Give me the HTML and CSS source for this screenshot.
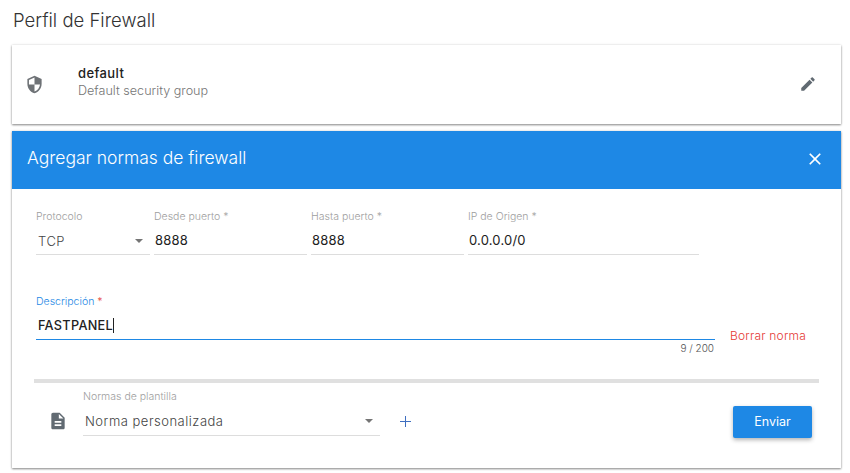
FILE: index.html
```html
<!DOCTYPE html>
<html lang="es">
<head>
    <meta charset="UTF-8">
    <title>Perfil de Firewall</title>
    <link rel="stylesheet" href="styles.css">
</head>
<body>
<div class="page">
    <h1 class="page-title">Perfil de Firewall</h1>

    <div class="card profile">
        <svg class="icon profile-shield" viewBox="0 0 24 24"><path d="M12 1L3 5v6c0 5.55 3.84 10.74 9 12 5.16-1.26 9-6.45 9-12V5l-9-4zm0 10.99h7c-.53 4.12-3.28 7.79-7 8.94V12H5V6.3l7-3.11v8.8z"/></svg>
        <div class="profile-text">
            <div class="profile-name">default</div>
            <div class="profile-desc">Default security group</div>
        </div>
        <svg class="icon profile-edit" viewBox="0 0 24 24"><path d="M3 17.25V21h3.75L17.81 9.94l-3.75-3.75L3 17.25zM20.71 7.04c.39-.39.39-1.02 0-1.41l-2.34-2.34c-.39-.39-1.02-.39-1.41 0l-1.83 1.83 3.75 3.75 1.83-1.83z"/></svg>
    </div>

    <div class="card rule">
        <div class="rule-header">
            <div class="rule-title">Agregar normas de firewall</div>
            <svg class="icon rule-close" viewBox="0 0 24 24"><path d="M19 6.41L17.59 5 12 10.59 6.41 5 5 6.41 10.59 12 5 17.59 6.41 19 12 13.41 17.59 19 19 17.59 13.41 12z"/></svg>
        </div>

        <div class="rule-body">
            <div class="row-ports">
                <div class="field field-proto">
                    <div class="field-label">Protocolo</div>
                    <div class="field-control control-select">
                        <span class="select-value">TCP</span>
                        <span class="caret"></span>
                    </div>
                </div>
                <div class="field field-port">
                    <div class="field-label">Desde puerto *</div>
                    <div class="field-control"><span class="input-value">8888</span></div>
                </div>
                <div class="field field-port">
                    <div class="field-label">Hasta puerto *</div>
                    <div class="field-control"><span class="input-value">8888</span></div>
                </div>
                <div class="field field-ip">
                    <div class="field-label">IP de Origen *</div>
                    <div class="field-control"><span class="input-value">0.0.0.0/0</span></div>
                </div>
            </div>

            <div class="row-desc">
                <div class="field field-desc">
                    <div class="field-label label-focus">Descripción <span class="required">*</span></div>
                    <div class="field-control control-focus"><span class="input-value value-desc">FASTPANEL</span><span class="text-cursor"></span></div>
                    <div class="counter">9 / 200</div>
                </div>
                <a class="delete-rule">Borrar norma</a>
            </div>

            <div class="divider"></div>

            <div class="row-template">
                <svg class="icon template-icon" viewBox="0 0 24 24"><path d="M14 2H6c-1.1 0-1.99.9-1.99 2L4 20c0 1.1.89 2 1.99 2H18c1.1 0 2-.9 2-2V8l-6-6zm2 16H8v-2h8v2zm0-4H8v-2h8v2zm-3-5V3.5L18.5 9H13z"/></svg>
                <div class="field field-template">
                    <div class="field-label">Normas de plantilla</div>
                    <div class="field-control control-select">
                        <span class="select-value">Norma personalizada</span>
                        <span class="caret"></span>
                    </div>
                </div>
                <svg class="plus" viewBox="0 0 12 12"><path d="M6 0v12M0 6h12"/></svg>
                <button class="send">Enviar</button>
            </div>
        </div>
    </div>
</div>
</body>
</html>
```
FILE: styles.css
```css
* {
    box-sizing: border-box;
}

body {
    margin: 0;
    background: #fff;
    font-family: Inter, "Liberation Sans", sans-serif;
    color: #212121;
}

.page {
    padding: 0 9px 5px 12px;
}

.page-title {
    margin: 0;
    height: 45px;
    padding: 9px 0 0 1px;
    font-size: 18.5px;
    line-height: 22px;
    font-weight: 300;
    color: #333;
}

.card {
    background: #fff;
    box-shadow: 0 1px 2px rgba(0, 0, 0, 0.45), 0 0 3px rgba(0, 0, 0, 0.1);
}

.icon {
    display: block;
    flex: none;
    fill: #616a72;
}

.profile {
    display: flex;
    align-items: center;
    height: 79px;
    padding: 0 24px 0 13px;
}

.profile-shield {
    width: 19px;
    height: 19px;
    fill: #6e7276;
}

.profile-text {
    flex: 1;
    margin-left: 34px;
    padding-bottom: 6px;
}

.profile-name {
    font-size: 13px;
    line-height: 18px;
    font-weight: 500;
    letter-spacing: 0.4px;
}

.profile-desc {
    font-size: 12.6px;
    line-height: 18px;
    font-weight: 300;
    color: #757575;
}

.profile-edit {
    width: 18px;
    height: 18px;
    margin-bottom: 1px;
}

.rule {
    margin-top: 7px;
    height: 337px;
}

.rule-header {
    display: flex;
    align-items: center;
    justify-content: space-between;
    height: 58px;
    padding: 0 16px 2px 15px;
    background: #1e88e5;
}

.rule-title {
    margin-bottom: 4px;
    color: #fff;
    font-size: 17.5px;
    font-weight: 300;
}

.rule-close {
    width: 20px;
    height: 20px;
    fill: #fff;
}

.rule-body {
    padding: 19px 22px 0;
}

.row-ports {
    display: flex;
    gap: 4px;
    padding-left: 2px;
}

.field-label {
    height: 17px;
    padding-top: 1px;
    font-size: 10.5px;
    line-height: 16px;
    font-weight: 300;
    color: #9e9e9e;
}

.field-control {
    display: flex;
    align-items: center;
    height: 30px;
    border-bottom: 1px solid #ddd;
}

.control-select {
    padding-top: 2px;
}

.select-value {
    flex: 1;
    padding-left: 2px;
    font-size: 13px;
    font-weight: 300;
    letter-spacing: 0.5px;
    color: #444;
}

.input-value {
    padding-left: 1px;
    font-size: 13px;
    letter-spacing: 0.2px;
}

.caret {
    width: 0;
    height: 0;
    margin-right: 7px;
    border-left: 4px solid transparent;
    border-right: 4px solid transparent;
    border-top: 4px solid #757575;
}

.field-proto {
    width: 114px;
}

.field-port {
    width: 153px;
}

.field-ip {
    width: 231px;
}

.row-desc {
    display: flex;
    margin-top: 38px;
    padding-left: 2px;
}

.field-desc {
    width: 679px;
}

.label-focus {
    color: #1e88e5;
}

.required {
    color: #e53935;
}

.control-focus {
    padding-top: 2px;
    border-bottom-color: #1e88e5;
}

.value-desc {
    padding-left: 2px;
    font-size: 12.7px;
    font-weight: 500;
    letter-spacing: 0.3px;
}

.text-cursor {
    width: 1px;
    height: 15px;
    background: #212121;
}

.counter {
    margin-top: 1px;
    padding-right: 1px;
    font-size: 10px;
    line-height: 14px;
    font-weight: 300;
    text-align: right;
    color: #555;
}

.delete-rule {
    margin: 35px 0 0 15px;
    font-size: 12px;
    line-height: 16px;
    font-weight: 300;
    letter-spacing: 0.2px;
    color: #e53935;
}

.divider {
    height: 4px;
    margin-top: 24px;
    background: #e0e0e0;
}

.row-template {
    display: flex;
    align-items: flex-start;
    margin-top: 5px;
    padding-left: 14px;
}

.template-icon {
    width: 20px;
    height: 20px;
    margin-top: 23px;
}

.field-template {
    width: 297px;
    margin-left: 15px;
}

.field-template .field-control {
    height: 31px;
}

.plus {
    width: 11px;
    height: 11px;
    margin: 28px 0 0 20px;
    fill: none;
    stroke: #3f6fc0;
    stroke-width: 1.1;
}

.send {
    width: 79px;
    height: 32px;
    margin: 18px 0 0 322px;
    padding: 0 0 2px;
    border: 0;
    border-radius: 2px;
    background: #1e88e5;
    color: #fff;
    font-family: inherit;
    font-size: 12.5px;
    box-shadow: 0 2px 4px rgba(0, 0, 0, 0.3);
}
```
